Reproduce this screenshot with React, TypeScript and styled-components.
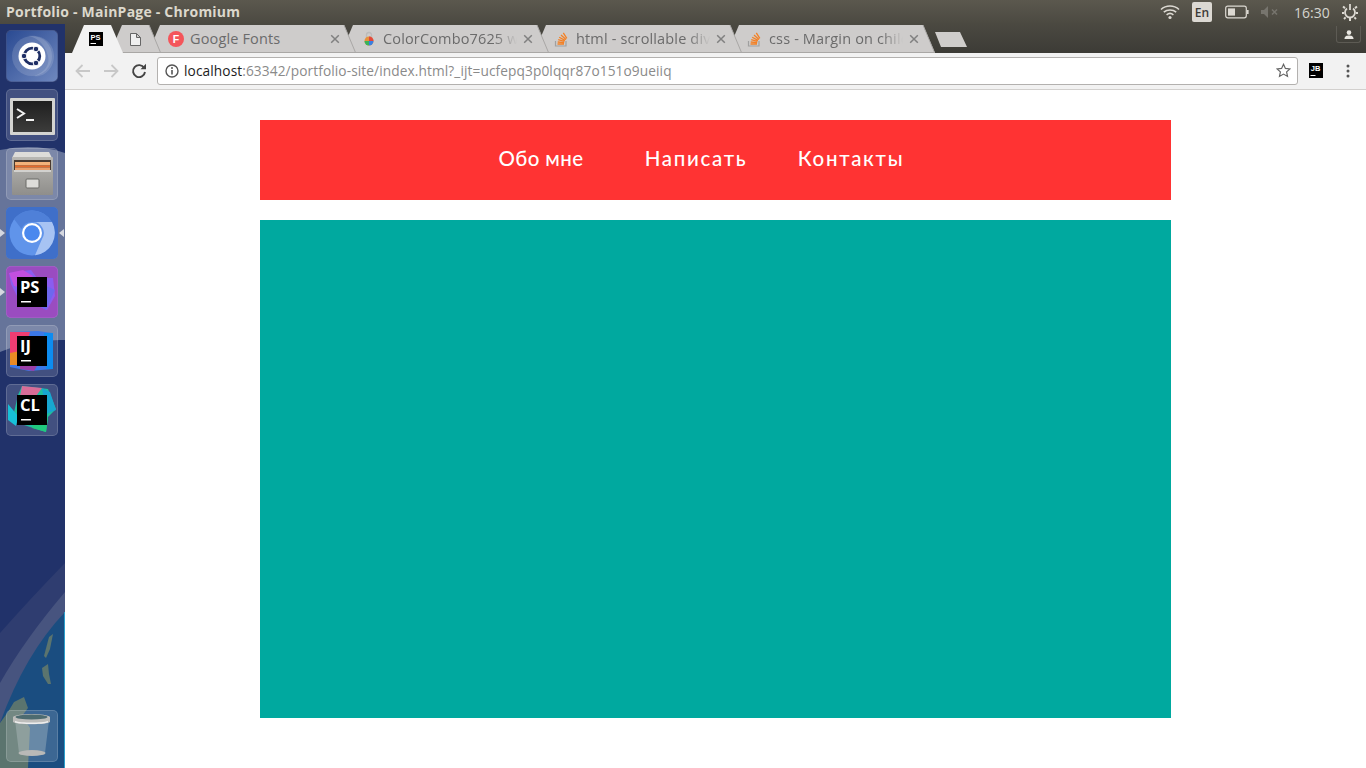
import React from "react";
import styled, { createGlobalStyle } from "styled-components";

const Global = createGlobalStyle`
  html, body { margin: 0; padding: 0; width: 1366px; height: 768px; overflow: hidden; background: #fff; }
  * { box-sizing: border-box; }
`;

const UI = `"Open Sans", "Noto Sans", "Liberation Sans", sans-serif`;

const Screen = styled.div`
  width: 1366px; height: 768px; display: flex; flex-direction: column; overflow: hidden; font-family: ${UI};
`;
const TitleBar = styled.header`
  height: 24px; flex: none; display: flex; align-items: center; padding: 0 8px 0 6px;
  background: linear-gradient(#5b584e, #4b4941);
`;
const WindowTitle = styled.div`
  font-size: 14px; font-weight: 700; color: #dcd8cc; letter-spacing: 0.22px; white-space: nowrap; padding-bottom: 2px;
`;
const Tray = styled.div`
  margin-left: auto; display: flex; align-items: center; height: 24px;
`;
const TrayItem = styled.div<{ $gap: number }>`
  margin-left: ${p => p.$gap}px; display: flex; align-items: center;
`;
const LangBox = styled.div`
  width: 20px; height: 20px; border-radius: 2px; background: #dcd9d3; color: #3c3b37;
  display: flex; align-items: center; justify-content: center; font-size: 12px; font-weight: 600;
`;
const Clock = styled.div`
  font-size: 14px; color: #d5d5cf; width: 36px; white-space: nowrap;
`;
const Body = styled.div`
  flex: 1; display: flex; min-height: 0;
`;
const Dock = styled.aside`
  width: 65px; flex: none; position: relative; display: flex; flex-direction: column;
  gap: 7px; padding: 6px 7px 6px 6px; background: #21326a; overflow: hidden;
`;
const Wallpaper = styled.svg`
  position: absolute; left: 0; top: 0; width: 65px; height: 744px;
`;
const Tile = styled.div<{ $bg?: string; $bottom?: boolean }>`
  position: relative; width: 52px; height: 52px; flex: none; border-radius: 5px;
  background: ${p => p.$bg || "rgba(255,255,255,0.15)"};
  box-shadow: inset 0 0 0 1px rgba(255,255,255,0.16);
  margin-top: ${p => (p.$bottom ? "auto" : "0")};
  svg { display: block; }
`;
const Pip = styled.span<{ $side: "left" | "right" }>`
  position: absolute; top: 22px; width: 0; height: 0;
  border-top: 4px solid transparent; border-bottom: 4px solid transparent;
  ${p => p.$side === "left"
    ? "left: -6px; border-left: 5px solid #d5d8e0;"
    : "right: -6px; border-right: 5px solid #d5d8e0;"}
`;
const Browser = styled.div`
  flex: 1; min-width: 0; display: flex; flex-direction: column;
`;
const TabStrip = styled.div`
  height: 29px; flex: none; display: flex; align-items: flex-end; padding-left: 7px; position: relative;
  background: linear-gradient(#4b4941, #3c3b36);
`;
const Tab = styled.div<{ $w: number; $overlap: number; $z: number; $center?: boolean; $pad?: string }>`
  position: relative; width: ${p => p.$w}px; height: 28px; flex: none; margin-left: ${p => -p.$overlap}px;
  z-index: ${p => p.$z}; display: flex; align-items: center; color: #5f5f5f;
  padding: ${p => p.$pad || "0 16px 0 20px"};
  justify-content: ${p => (p.$center ? "center" : "flex-start")};
`;
const TabShape = styled.svg`
  position: absolute; left: 0; top: 0; z-index: -1;
`;
const TabLabel = styled.div`
  flex: 1; min-width: 0; margin: 0 6px 0 6px; padding-bottom: 2px; font-size: 14.5px; letter-spacing: 0.15px; color: #6b6b6b; white-space: nowrap; overflow: hidden;
  -webkit-mask-image: linear-gradient(to right, #000 84%, transparent 100%);
  mask-image: linear-gradient(to right, #000 84%, transparent 100%);
`;
const TabLabelPlain = styled(TabLabel)`
  -webkit-mask-image: none; mask-image: none;
`;
const NewTab = styled.div`
  width: 32px; height: 15px; margin: 0 0 6px 0; flex: none; background: #cfcdcb;
  clip-path: polygon(0 0, 25px 0, 100% 100%, 6px 100%);
`;
const ProfileBtn = styled.div`
  position: absolute; right: 5px; top: 2px; width: 25px; height: 17px; border: 1px solid #5d5b54; border-top: none;
  border-radius: 0 0 3px 3px; display: flex; align-items: center; justify-content: center;
`;
const Toolbar = styled.div`
  height: 37px; flex: none; display: flex; align-items: center; background: #f2f2f2;
  border-bottom: 1px solid #d2d0ce; padding: 0 10px 1px 10px;
`;
const NavBtn = styled.div<{ $w: number }>`
  width: ${p => p.$w}px; flex: none; display: flex; align-items: center; justify-content: center;
`;
const Omnibox = styled.div`
  width: 1141px; height: 28px; flex: none; margin-left: 1px; background: #fff; border: 1px solid #b3b1af; border-radius: 3px;
  display: flex; align-items: center; padding: 0 6px 0 7px;
`;
const Url = styled.div`
  margin-left: 5px; flex: 1; font-size: 13.7px; color: #8a8a8a; white-space: nowrap; letter-spacing: 0.1px;
  b { font-weight: 400; color: #1c1c1c; }
`;
const Page = styled.main`
  flex: 1; background: #fff; padding: 30px 195px 50px; display: flex; flex-direction: column; gap: 20px; min-height: 0;
`;
const NavBar = styled.nav`
  height: 80px; flex: none; background: #ff3333; display: flex; align-items: center; justify-content: center; padding-right: 39px;
`;
const NavItem = styled.a<{ $spacing: number }>`
  width: 155px; text-align: center; color: #fff; font-family: "Lato", "Noto Sans", sans-serif; font-size: 20.5px; font-weight: 500;
  letter-spacing: ${p => p.$spacing}px; white-space: nowrap; padding-bottom: 4px;
`;
const Content = styled.section`
  flex: 1; background: #00a99f;
`;

const Close = () => (
  <svg width="10" height="10" viewBox="0 0 10 10" style={{ flex: "none" }}>
    <path d="M1.2 1.2 8.800 8.800M8.800 1.200 1.200 8.800" stroke="#808080" strokeWidth="1.5" />
  </svg>
);
const SO = () => (
  <svg width="16" height="16" viewBox="0 0 16 16" style={{ flex: "none" }}>
    <path d="M1.500 10v5h10.500v-5" fill="none" stroke="#a0a0a0" strokeWidth="1.2" />
    <path d="M3.500 13h6.500M3.700 11l6.500.6M4.200 8.600l6.300 1.800M5.200 6.200l5.800 3.200M7 3.900l5 4.600M9.300 1.800l3.500 5.600" stroke="#f48024" strokeWidth="1.300" fill="none" />
  </svg>
);
const TabBg = ({ w, active, leftLine = true }: { w: number; active?: boolean; leftLine?: boolean }) => (
  <TabShape width={w} height="28" viewBox={`0 0 ${w} 28`}>
    <path d={`M0 28 L12 0 H${w - 12} L${w} 28 Z`} fill={active ? "#f2f2f2" : "#cecccb"} />
    {!active && <path d={`M0 27.5H${w}`} stroke="#a9a7a5" />}
    {!active && leftLine && <path d={`M3 20 L6 27.5`} stroke="#a9a7a5" />}
    {!active && <path d={`M${w - 12} 0 L${w - 0.5} 27.5`} stroke="#a9a7a5" fill="none" />}
  </TabShape>
);

const JBSquare = ({ label }: { label: string }) => (
  <g>
    <rect x="11" y="11" width="30" height="30" fill="#000" />
    <text x="14" y="27" fontFamily='"Open Sans", "Liberation Sans", sans-serif' fontWeight="700" fontSize="16.5" fill="#fff">{label}</text>
    <rect x="15" y="35" width="10" height="1.500" fill="#fff" />
  </g>
);

const UbuntuIcon = () => (
  <svg width="52" height="52" viewBox="0 0 52 52">
    <defs>
      <linearGradient id="ub" x1="0" y1="0" x2="1" y2="1"><stop offset="0" stopColor="#2a4a92" /><stop offset="1" stopColor="#6f88bf" /></linearGradient>
    </defs>
    <rect x="0.500" y="0.500" width="51" height="51" rx="5" fill="url(#ub)" />
    <path d="M22 6c16-2 26 8 26 20s-10 22-20 20c12-4 16-12 14-20S34 8 22 6z" fill="#fff" opacity="0.14" />
    <circle cx="26" cy="26" r="20" fill="#fff" opacity="0.14" />
    <circle cx="26" cy="26" r="13.500" fill="#fff" />
    <circle cx="26" cy="26" r="7.800" fill="none" stroke="#1f2f65" strokeWidth="2.800" />
    <circle cx="18" cy="26" r="2.800" fill="#1f2f65" stroke="#fff" />
    <circle cx="30" cy="19" r="2.800" fill="#1f2f65" stroke="#fff" />
    <circle cx="30" cy="33" r="2.800" fill="#1f2f65" stroke="#fff" />
  </svg>
);
const TerminalIcon = () => (
  <svg width="52" height="52" viewBox="0 0 52 52">
    <defs><linearGradient id="tm" x1="0" y1="0" x2="0" y2="1"><stop offset="0" stopColor="#1f1f1f" /><stop offset="1" stopColor="#3c3c3b" /></linearGradient></defs>
    <rect x="4" y="9" width="45" height="37" rx="1" fill="#d4d4d1" />
    <rect x="7" y="12" width="39" height="31" fill="url(#tm)" />
    <path d="M11 20l7 4.500-7 4.500" stroke="#f2f2f2" strokeWidth="2" fill="none" />
    <rect x="20" y="30" width="8" height="2" fill="#f2f2f2" />
  </svg>
);
const FilesIcon = () => (
  <svg width="52" height="52" viewBox="0 0 52 52">
    <defs><linearGradient id="fi" x1="0" y1="0" x2="0" y2="1"><stop offset="0" stopColor="#b8b7b3" /><stop offset="1" stopColor="#8f8e8b" /></linearGradient></defs>
    <path d="M9 4h34l3 6H6z" fill="#dddcd9" />
    <rect x="6" y="9" width="41" height="38" rx="1" fill="url(#fi)" />
    <rect x="8" y="12" width="37" height="11" fill="#4a3a30" />
    <rect x="9" y="14" width="35" height="3.500" fill="#f3b27a" />
    <rect x="9" y="17.500" width="35" height="2" fill="#e66a2c" />
    <rect x="9" y="19.500" width="35" height="3" fill="#e8a06c" />
    <rect x="8" y="22" width="37" height="2" fill="#d2d1ce" />
    <rect x="20" y="31" width="13" height="9" rx="1" fill="#dddcd9" stroke="#6b6a67" />
  </svg>
);
const ChromiumIcon = () => (
  <svg width="52" height="52" viewBox="0 0 52 52">
    <defs><clipPath id="cb"><rect width="52" height="52" rx="5" /></clipPath></defs>
    <g clipPath="url(#cb)">
      <rect width="52" height="52" fill="#3f6fc9" />
      <circle cx="26" cy="26" r="22.500" fill="#6094ea" />
      <path d="M26 15 H46 A22.500 22.500 0 0 1 29 48.300 L36 32 A11 11 0 0 0 26 15Z" fill="#a7c3f3" />
      <path d="M26 3.500 A22.500 22.500 0 0 1 46 15 H26 A11 11 0 0 0 15.500 22 L8 12 A22.500 22.500 0 0 1 26 3.500Z" fill="#4f80d8" />
      <circle cx="26" cy="26" r="10" fill="#fff" />
      <circle cx="26" cy="26" r="7.800" fill="#4a88ee" />
    </g>
  </svg>
);
const PSIcon = () => (
  <svg width="52" height="52" viewBox="0 0 52 52">
    <rect x="0.500" y="0.500" width="51" height="51" rx="5" fill="#9a4cc0" />
    <path d="M3 7l22-3 6 8 16 0 2 18-8 14-14-6-14-4-8-16z" fill="#8a5df0" />
    <path d="M3 7l14-3 10 6-10 12-9-2z" fill="#c24fe0" />
    <path d="M36 18l13 6-9 20-12-8z" fill="#6d68ee" />
    <JBSquare label="PS" />
  </svg>
);
const IJIcon = () => (
  <svg width="52" height="52" viewBox="0 0 52 52">
    <path d="M4 7l28-1 14 2 1 36-24 2-19-4z" fill="#3b78e8" />
    <path d="M4 7l20 0-6 20-14 2z" fill="#ee3d72" />
    <path d="M4 28l10-2 2 14-12 0z" fill="#e88a24" />
    <path d="M14 30l20 6-6 10-14-2z" fill="#9a3fa8" />
    <path d="M38 8h9v36H40z" fill="#0d8cf0" />
    <JBSquare label="IJ" />
  </svg>
);
const CLIcon = () => (
  <svg width="52" height="52" viewBox="0 0 52 52">
    <path d="M16 2l26 3 8 20-8 8-2 15-16-5-18-6 6-26z" fill="#1fbfa0" />
    <path d="M16 2l20 2-6 8H14z" fill="#d86c98" />
    <path d="M36 4l8 4 6 18-10 4z" fill="#17a6d0" />
    <path d="M2 20l10 12-2 10-8-6z" fill="#17c1d8" />
    <path d="M28 38l14-4-2 14-14-4z" fill="#21c97e" />
    <JBSquare label="CL" />
  </svg>
);
const TrashIcon = () => (
  <svg width="52" height="52" viewBox="0 0 52 52">
    <path d="M9 10l4 33c0 3 26 3 26 0l4-33z" fill="#c8d0d4" opacity="0.32" />
    <ellipse cx="26" cy="43" rx="13.500" ry="3" fill="#b9b9b7" />
    <path d="M7 7c3-4 34-4 37 0v5c-3 3-34 3-37 0z" fill="#bdbdbb" />
    <ellipse cx="25.500" cy="7" rx="16" ry="2.600" fill="#4d6b70" />
    <path d="M9 11c6 2 27 2 33 0v1.600c-6 2-27 2-33 0z" fill="#eee" />
  </svg>
);

const PinnedPS = () => (
  <svg width="14" height="14" viewBox="0 0 14 14" style={{ flex: "none" }}>
    <rect width="14" height="14" fill="#000" />
    <text x="1.500" y="7.800" fontFamily='"Liberation Sans", sans-serif' fontWeight="700" fontSize="7.500" fill="#fff">PS</text>
    <rect x="1.500" y="11" width="5.500" height="1" fill="#fff" />
  </svg>
);
const DocIcon = () => (
  <svg width="11" height="13" viewBox="0 0 11 13" style={{ flex: "none" }}>
    <path d="M.5.5h6l4 4v8H.5zM6.500.5v4h4" fill="#efefef" stroke="#666" />
  </svg>
);
const FontsFav = () => (
  <svg width="16" height="16" viewBox="0 0 16 16" style={{ flex: "none" }}>
    <circle cx="8" cy="8" r="8" fill="#f4555a" />
    <text x="8" y="12" textAnchor="middle" fontFamily='"Liberation Sans", sans-serif' fontWeight="700" fontSize="10.500" fill="#fff">F</text>
  </svg>
);
const ComboFav = () => (
  <svg width="16" height="16" viewBox="0 0 16 16" style={{ flex: "none" }}>
    <path d="M5.500 7V4a2.500 2.500 0 0 1 5 0v3" fill="none" stroke="#bbb" strokeWidth="1.300" />
    <circle cx="8" cy="10" r="4.500" fill="#e8913a" />
    <path d="M8 10V5.500a4.500 4.500 0 0 1 4.500 4.500z" fill="#e2483d" />
    <path d="M8 10h4.500A4.500 4.500 0 0 1 8 14.500z" fill="#3b7fe0" />
    <path d="M8 10v4.500A4.500 4.500 0 0 1 3.500 10z" fill="#3bb35a" />
  </svg>
);
const Wifi = () => (
  <svg width="20" height="16" viewBox="0 0 20 16">
    <g fill="none" stroke="#dcd9d2" strokeWidth="1.600">
      <path d="M1 5.500c5-4.600 13-4.600 18 0" />
      <path d="M3.800 8.200c3.400-3 9-3 12.400 0" />
      <path d="M6.600 10.800c2-1.600 4.800-1.600 6.800 0" />
    </g>
    <circle cx="10" cy="13.500" r="1.600" fill="#dcd9d2" />
  </svg>
);
const Battery = () => (
  <svg width="24" height="14" viewBox="0 0 24 14">
    <rect x="0.700" y="1.200" width="20.600" height="11.600" rx="2" fill="none" stroke="#dcd9d2" strokeWidth="1.200" />
    <rect x="3" y="3.400" width="7" height="7.200" fill="#dcd9d2" />
    <rect x="22" y="5" width="1.600" height="4" fill="#dcd9d2" />
  </svg>
);
const Mute = () => (
  <svg width="17" height="12" viewBox="0 0 17 12">
    <path d="M0 4h3l4-4v12L3 8H0z" fill="#77756e" />
    <path d="M11 3.500l5 5M16 3.500l-5 5" stroke="#77756e" strokeWidth="1.500" />
  </svg>
);
const Gear = () => (
  <svg width="16" height="18" viewBox="0 0 16 18">
    <g fill="none" stroke="#dcd9d2" strokeWidth="1.800">
      <path d="M5 5.500a5 5 0 1 0 6 0" />
      <path d="M8 1v6" />
    </g>
    <g stroke="#dcd9d2" strokeWidth="2">
      <path d="M1 3.500l2 1.600M15 3.500l-2 1.600M0 10h2M14 10h2M2 16l1.600-1.600M14 16l-1.600-1.600M8 15v3" />
    </g>
  </svg>
);
const Back = ({ flip }: { flip?: boolean }) => (
  <svg width="16" height="14" viewBox="0 0 16 14" style={flip ? { transform: "scaleX(-1)" } : undefined}>
    <path d="M15 7H2M7.500 1 1.500 7l6 6" fill="none" stroke="#c8c8c8" strokeWidth="1.800" />
  </svg>
);
const Reload = () => (
  <svg width="16" height="16" viewBox="0 0 16 16">
    <path d="M13.200 5A6 6 0 1 0 14 9" fill="none" stroke="#444" strokeWidth="1.900" />
    <path d="M9.500 6.200H15V.8z" fill="#444" />
  </svg>
);
const Info = () => (
  <svg width="14" height="14" viewBox="0 0 14 14" style={{ flex: "none" }}>
    <circle cx="7" cy="7" r="6" fill="none" stroke="#555" strokeWidth="1.400" />
    <path d="M7 6v4.500" stroke="#555" strokeWidth="1.600" />
    <circle cx="7" cy="3.900" r="1" fill="#555" />
  </svg>
);
const Star = () => (
  <svg width="15" height="15" viewBox="0 0 15 15" style={{ flex: "none" }}>
    <path d="M7.500 1.300l1.900 4.100 4.500.5-3.300 3 .9 4.500-4-2.300-4 2.300.9-4.500-3.300-3 4.500-.5z" fill="none" stroke="#666" strokeWidth="1.200" />
  </svg>
);
const JBExt = () => (
  <svg width="14" height="15" viewBox="0 0 14 15">
    <rect width="14" height="15" fill="#000" />
    <text x="1.800" y="8" fontFamily='"Liberation Sans", sans-serif' fontWeight="700" fontSize="7.500" fill="#fff">JB</text>
    <rect x="1.500" y="12" width="5" height="1" fill="#fff" />
  </svg>
);
const Dots = () => (
  <svg width="4" height="14" viewBox="0 0 4 14">
    <circle cx="2" cy="2" r="1.500" fill="#555" /><circle cx="2" cy="7" r="1.500" fill="#555" /><circle cx="2" cy="12" r="1.500" fill="#555" />
  </svg>
);
const Person = () => (
  <svg width="10" height="9" viewBox="0 0 10 9">
    <circle cx="5" cy="2.600" r="2.300" fill="#e8e6e0" />
    <path d="M0.500 9c0-3 2-3.600 4.500-3.600S9.500 6 9.500 9z" fill="#e8e6e0" />
  </svg>
);

export default function App() {
  return (
    <>
      <Global />
      <Screen>
        <TitleBar>
          <WindowTitle>Portfolio - MainPage - Chromium</WindowTitle>
          <Tray>
            <TrayItem $gap={0}><Wifi /></TrayItem>
            <TrayItem $gap={12}><LangBox>En</LangBox></TrayItem>
            <TrayItem $gap={13}><Battery /></TrayItem>
            <TrayItem $gap={12}><Mute /></TrayItem>
            <TrayItem $gap={16}><Clock>16:30</Clock></TrayItem>
            <TrayItem $gap={12}><Gear /></TrayItem>
          </Tray>
        </TitleBar>
        <Body>
          <Dock>
            <Wallpaper viewBox="0 0 65 744">
              <path d="M0 126 Q35 119 65 129 V316 Q30 315 0 328Z" fill="#66749a" />
              <path d="M65 539 V744 H0 V609 Q30 575 65 539Z" fill="#2f3d70" />
              <path d="M65 568 V744 H0 V659 Q25 615 65 568Z" fill="#47547f" />
              <path d="M65 588 V744 H0 V699 Q25 630 65 588Z" fill="#1a4d80" />
              <path d="M0 699 L8 688 L14 678 L24 673 L28 684 L22 692 L30 704 L28 744 H0Z" fill="#5b746e" />
              <path d="M49 613 L53 610 L50 625 L46 634 L44 632Z" fill="#5b746e" />
              <path d="M42 644 L48 640 L49 650 L51 660 L48 660 L43 652Z" fill="#5b746e" />
              <rect x="64" y="588" width="1" height="156" fill="#2a9fcc" />
            </Wallpaper>
            <Tile $bg="transparent"><UbuntuIcon /></Tile>
            <Tile><TerminalIcon /></Tile>
            <Tile><FilesIcon /></Tile>
            <Tile $bg="#3f6fc9"><ChromiumIcon /><Pip $side="left" /><Pip $side="right" /></Tile>
            <Tile $bg="#9a4cc0"><PSIcon /><Pip $side="left" /></Tile>
            <Tile><IJIcon /></Tile>
            <Tile><CLIcon /></Tile>
            <Tile $bottom><TrashIcon /></Tile>
          </Dock>
          <Browser>
            <TabStrip>
              <Tab $w={51} $overlap={0} $z={9} $center $pad="0 3px 0 0"><TabBg w={51} active /><PinnedPS /></Tab>
              <Tab $w={51} $overlap={13} $z={6} $center $pad="0"><TabBg w={51} leftLine={false} /><DocIcon /></Tab>
              <Tab $w={208} $overlap={13} $z={5}><TabBg w={208} /><FontsFav /><TabLabelPlain>Google Fonts</TabLabelPlain><Close /></Tab>
              <Tab $w={208} $overlap={15} $z={4}><TabBg w={208} /><ComboFav /><TabLabel>ColorCombo7625 w</TabLabel><Close /></Tab>
              <Tab $w={208} $overlap={15} $z={3}><TabBg w={208} /><SO /><TabLabel>html - scrollable div</TabLabel><Close /></Tab>
              <Tab $w={208} $overlap={15} $z={2}><TabBg w={208} /><SO /><TabLabel>css - Margin on child</TabLabel><Close /></Tab>
              <NewTab />
              <ProfileBtn><Person /></ProfileBtn>
            </TabStrip>
            <Toolbar>
              <NavBtn $w={16}><Back /></NavBtn>
              <NavBtn $w={40}><Back flip /></NavBtn>
              <NavBtn $w={16}><Reload /></NavBtn>
              <NavBtn $w={9} />
              <Omnibox>
                <Info />
                <Url><b>localhost</b>:63342/portfolio-site/index.html?_ijt=ucfepq3p0lqqr87o151o9ueiiq</Url>
                <Star />
              </Omnibox>
              <NavBtn $w={36}><JBExt /></NavBtn>
              <NavBtn $w={28}><Dots /></NavBtn>
            </Toolbar>
            <Page>
              <NavBar>
                <NavItem $spacing={0.4}>Обо мне</NavItem>
                <NavItem $spacing={1.7}>Написать</NavItem>
                <NavItem $spacing={1.7}>Контакты</NavItem>
              </NavBar>
              <Content />
            </Page>
          </Browser>
        </Body>
      </Screen>
    </>
  );
}
